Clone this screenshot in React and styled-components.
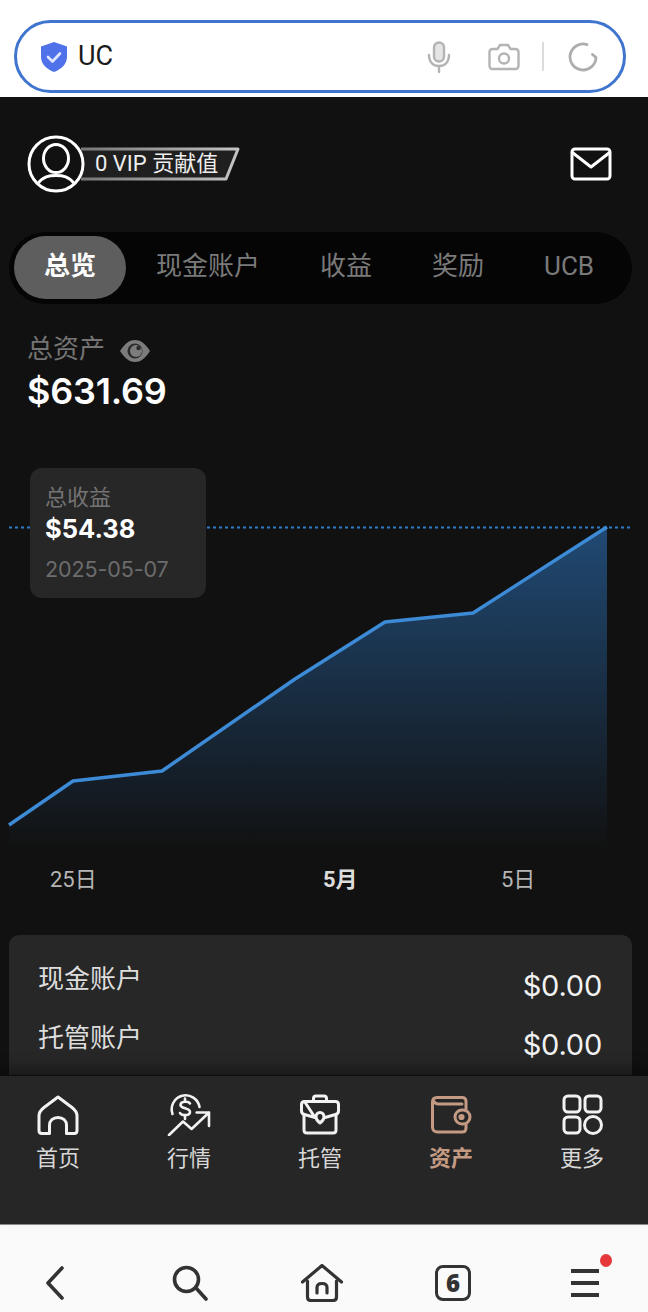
import styled, { createGlobalStyle } from "styled-components";

const GlobalStyle = createGlobalStyle`
  html, body {
    margin: 0;
    padding: 0;
    background: #111;
  }
  * {
    box-sizing: border-box;
  }
`;

const FONT = `Inter, "Noto Sans CJK SC", sans-serif`;

const Page = styled.div`
  width: 648px;
  height: 1312px;
  display: flex;
  flex-direction: column;
  overflow: hidden;
  font-family: ${FONT};
`;

const TopBar = styled.div`
  height: 97px;
  flex: none;
  background: #fff;
  padding: 20px 22px 0 14px;
`;

const AddressPill = styled.div`
  width: 612px;
  height: 73px;
  border: 3px solid #3f74cf;
  border-radius: 37px;
  display: flex;
  align-items: center;
  padding: 0 25px 0 22px;
`;

const UrlText = styled.span`
  margin-left: 9px;
  font-size: 27px;
  color: #1c1c1c;
  font-family: Roboto, sans-serif;
  flex: 1;
  margin-top: -2px;
`;

const PillTools = styled.div`
  display: flex;
  align-items: center;
`;

const MicSlot = styled.span`
  display: flex;
  margin-right: 37px;
`;

const Divider = styled.span`
  width: 2px;
  height: 29px;
  background: #dcdcdc;
  margin: 0 24px 0 22px;
`;

const Screen = styled.div`
  flex: 1;
  min-height: 0;
  display: flex;
  flex-direction: column;
  background: #111;
`;

const Scroll = styled.div`
  flex: 1;
  min-height: 0;
  overflow: hidden;
`;

const Header = styled.div`
  display: flex;
  justify-content: space-between;
  align-items: center;
  padding: 38px 36px 0 27px;
`;

const UserBlock = styled.div`
  display: flex;
  align-items: center;
`;

const Avatar = styled.svg`
  position: relative;
  z-index: 1;
  flex: none;
`;

const Badge = styled.div`
  position: relative;
  width: 160px;
  height: 34px;
  margin-left: -4px;
  padding-left: 14px;
  font-size: 22px;
  line-height: 34px;
  color: #eee;
  white-space: nowrap;
  font-family: Roboto, "Noto Sans CJK SC", sans-serif;

  svg {
    position: absolute;
    left: 0;
    top: 0;
  }
  span {
    position: relative;
  }
`;

const Tabs = styled.div`
  display: flex;
  width: 623px;
  height: 72px;
  margin: 39px 0 0 9px;
  padding: 4px 5px;
  border-radius: 36px;
  background: #050505;
  overflow: hidden;
`;

const Tab = styled.div`
  flex: none;
  height: 63px;
  padding: 0 30px;
  line-height: 61px;
  font-size: 26px;
  font-family: Roboto, "Noto Sans CJK SC", sans-serif;
  white-space: nowrap;
  border-radius: 32px;
  font-weight: ${(p) => (p.$active ? 700 : 400)};
  color: ${(p) => (p.$active ? "#fff" : "#7a7a7a")};
  background: ${(p) => (p.$active ? "#5e5e5e" : "transparent")};
`;

const TotalLabel = styled.div`
  display: flex;
  align-items: center;
  margin: 30px 0 0 27px;
  height: 30px;
  font-size: 26px;
  line-height: 30px;
  color: #747474;

  svg {
    margin: 4px 0 0 15px;
  }
`;

const TotalValue = styled.div`
  margin: 5px 0 0 27px;
  font-size: 36px;
  line-height: 44px;
  font-weight: 600;
  color: #fff;
  letter-spacing: -0.2px;
`;

const ChartWrap = styled.div`
  position: relative;
  height: 452px;

  svg {
    display: block;
  }
`;

const Tooltip = styled.div`
  position: absolute;
  left: 30px;
  top: 55px;
  width: 176px;
  height: 130px;
  padding: 15px 15px 0;
  border-radius: 12px;
  background: #272727;
`;

const TipLabel = styled.div`
  font-size: 22px;
  line-height: 28px;
  color: #747474;
`;

const TipValue = styled.div`
  font-size: 25.5px;
  line-height: 35px;
  font-weight: 700;
  color: #fff;
`;

const TipDate = styled.div`
  margin-top: 6px;
  font-size: 21.5px;
  line-height: 34px;
  color: #6c6c6c;
  letter-spacing: -0.1px;
`;

const Axis = styled.div`
  display: grid;
  grid-template-columns: 273px 178px auto;
  height: 30px;
  padding-left: 50px;
  font-size: 22px;
  line-height: 30px;
  font-family: Roboto, "Noto Sans CJK SC", sans-serif;
`;

const AxisLabel = styled.span`
  font-weight: ${(p) => (p.$bold ? 700 : 400)};
  color: ${(p) => (p.$bold ? "#ddd" : "#b5b5b5")};
`;

const Card = styled.div`
  width: 623px;
  height: 200px;
  margin: 40px 0 0 9px;
  padding: 29px 30px 0;
  border-radius: 10px;
  background: #272727;
`;

const Row = styled.div`
  display: flex;
  justify-content: space-between;
  height: 59px;
`;

const RowLabel = styled.span`
  font-size: 26px;
  line-height: 30px;
  color: #ddd;
  margin-left: -1px;
`;

const RowValue = styled.span`
  margin-top: 4px;
  font-size: 29px;
  line-height: 36px;
  color: #f2f2f2;
  letter-spacing: -0.2px;
`;

const Nav = styled.div`
  position: relative;
  flex: none;
  height: 149px;
  display: flex;
  gap: 41px;
  padding: 16px 0 0 13px;
  background: #262626;
  border-top: 1px solid #0c0c0c;
  box-shadow: 0 -8px 12px rgba(0, 0, 0, 0.35);
`;

const NavItem = styled.div`
  width: 90px;
  display: flex;
  flex-direction: column;
  align-items: center;
  font-size: 22px;
  line-height: 30px;
  font-weight: ${(p) => (p.$active ? 700 : 400)};
  color: ${(p) => (p.$active ? "#c49a83" : "#d8d8d8")};

  svg {
    display: block;
    margin-bottom: 7px;
  }
`;

const BottomBar = styled.div`
  flex: none;
  height: 88px;
  display: grid;
  grid-template-columns: 131px 139px 126px 136px 128px;
  margin-left: -11px;
  background: #fafafa;
  border-top: 1px solid #8d8d8d;
  width: 660px;
`;

const BottomSlot = styled.div`
  position: relative;
  display: flex;
  justify-content: center;
  align-items: center;
  padding-top: 29px;
`;

const TabCount = styled.div`
  width: 36px;
  height: 36px;
  border: 3px solid #333;
  border-radius: 8px;
  display: flex;
  align-items: center;
  justify-content: center;
  font-family: "Open Sans", sans-serif;
  font-size: 24px;
  font-weight: 800;
  line-height: 1;
  color: #333;
`;

const Dot = styled.span`
  position: absolute;
  left: 79px;
  top: 29px;
  width: 12px;
  height: 13px;
  border-radius: 50%;
  background: #e5383b;
`;

const ShieldIcon = () => (
  <svg width="30" height="32" viewBox="0 0 30 32">
    <path d="M15 1 L28 5.5 V16 C28 23 22 28.5 15 31 C8 28.5 2 23 2 16 V5.5 Z" fill="#4f72ea" />
    <path d="M9 16 L13.5 20.5 L21 12.5" fill="none" stroke="#dfe7ff" strokeWidth="2.6" strokeLinecap="round" strokeLinejoin="round" />
  </svg>
);

const MicIcon = () => (
  <svg width="24" height="32" viewBox="0 0 24 32" fill="none" stroke="#b4b4b4" strokeWidth="2.4" strokeLinecap="round">
    <rect x="7" y="1.5" width="10" height="19" rx="5" fill="#b4b4b4" fillOpacity="0.35" />
    <path d="M2 14 C2 21 6 25 12 25 C18 25 22 21 22 14 M12 25 V31" />
  </svg>
);

const CameraIcon = () => (
  <svg width="32" height="28" viewBox="0 0 32 28" fill="none" stroke="#b4b4b4" strokeWidth="2.4" strokeLinejoin="round">
    <path d="M4.5 6 H9.5 L12 2 H20 L22.5 6 H27.5 A3 3 0 0 1 30.5 9 V23 A3 3 0 0 1 27.5 26 H4.5 A3 3 0 0 1 1.5 23 V9 A3 3 0 0 1 4.5 6 Z" />
    <circle cx="16" cy="15.5" r="5" />
  </svg>
);

const RefreshIcon = () => (
  <svg width="30" height="30" viewBox="0 0 30 30" fill="none" stroke="#adadad" strokeWidth="2.8" strokeLinecap="round" strokeLinejoin="round">
    <path d="M19 2.6 A13 13 0 1 0 28 15.5 L24.5 12.5" />
  </svg>
);

const AvatarIcon = () => (
  <Avatar width="58" height="58" viewBox="0 0 58 58" fill="#111" stroke="#fff" strokeWidth="3">
    <circle cx="29" cy="29" r="27" />
    <ellipse cx="29" cy="23.5" rx="12.5" ry="14" />
    <path d="M11 48.5 C16 41.5 22 40.5 29 40.5 C36 40.5 42 41.5 47 48.5" />
  </Avatar>
);

const BadgeShape = () => (
  <svg width="160" height="34" viewBox="0 0 160 34" fill="none">
    <defs>
      <linearGradient id="badgeStroke" x1="0" y1="0" x2="1" y2="0">
        <stop offset="0" stopColor="#777" />
        <stop offset="1" stopColor="#c4c4c4" />
      </linearGradient>
    </defs>
    <path d="M0 2 H157 L145 32 H0" fill="#1f1f1f" stroke="url(#badgeStroke)" strokeWidth="3" strokeLinejoin="round" />
  </svg>
);

const MailIcon = () => (
  <svg width="42" height="34" viewBox="0 0 42 34" fill="none" stroke="#fff" strokeWidth="3" strokeLinecap="round" strokeLinejoin="round">
    <rect x="2" y="2" width="38" height="30" rx="3" />
    <path d="M3 6 L21 20 L39 6" />
  </svg>
);

const EyeIcon = () => (
  <svg width="30" height="22" viewBox="0 0 30 22">
    <path d="M0 11 C5 3 10 0 15 0 C20 0 25 3 30 11 C25 19 20 22 15 22 C10 22 5 19 0 11 Z" fill="#7c7c7c" />
    <circle cx="15" cy="11" r="7.5" fill="#2a2a2a" />
    <circle cx="16" cy="11" r="6" fill="#7c7c7c" />
    <circle cx="18.5" cy="8" r="2.2" fill="#2a2a2a" />
  </svg>
);

const NavHome = () => (
  <svg width="44" height="44" viewBox="0 0 44 44" fill="none" stroke="#f2f2f2" strokeWidth="3" strokeLinejoin="round" strokeLinecap="round">
    <path d="M22 5 L36 15.5 C38.5 17.5 41 19.5 41 23.5 V38.5 C41 40.5 40 41.5 38 41.5 H30.5 V33.5 C30.5 28.5 27 25.5 22 25.5 C17 25.5 13.5 28.5 13.5 33.5 V41.5 H6 C4 41.5 3 40.5 3 38.5 V23.5 C3 19.5 5.5 17.5 8 15.5 Z" />
  </svg>
);

const NavMarket = () => (
  <svg width="44" height="44" viewBox="0 0 44 44" fill="none" stroke="#f2f2f2" strokeWidth="2.6" strokeLinecap="round" strokeLinejoin="round">
    <path d="M5.5 22 A14 14 0 1 1 32.5 15" />
    <path d="M23 11.5 C21.5 9 13.5 9 13.5 13 C13.5 17 23 15.5 23 20 C23 24 14.5 24 13 21 M18 6.5 V9.5 M18 24 V27" />
    <path d="M2 43 L16 29.5 L24.6 37 L42 20.5 M29.6 20.5 H42 V34" />
  </svg>
);

const NavCustody = () => (
  <svg width="44" height="44" viewBox="0 0 44 44" fill="none" stroke="#f2f2f2" strokeWidth="3" strokeLinecap="round" strokeLinejoin="round">
    <path d="M15.5 9.5 V6.5 C15.5 5 16.5 4 18 4 H26 C27.5 4 28.5 5 28.5 6.5 V9.5" />
    <path d="M6.5 9.5 H37.5 C39.5 9.5 40.5 10.5 40.5 12.5 V19 C40.5 21 39.5 22 37.5 22.5 L27 25.5 M17 25.5 L6.5 22.5 C4.5 22 3.5 21 3.5 19 V12.5 C3.5 10.5 4.5 9.5 6.5 9.5 Z" />
    <path d="M6 23 V38 C6 40 7 41 9 41 H35 C37 41 38 40 38 38 V23" />
    <path d="M22 20.5 C24.5 20.5 26 22.5 26 25 C26 27.5 24 29.5 22 31 C20 29.5 18 27.5 18 25 C18 22.5 19.5 20.5 22 20.5 Z" />
  </svg>
);

const NavWallet = () => (
  <svg width="44" height="44" viewBox="0 0 44 44" fill="none" stroke="#c49a83" strokeWidth="3" strokeLinecap="round" strokeLinejoin="round">
    <path d="M37 17 V9.5 C37 7 35.5 5.5 33 5.5 H8 C5 5.5 3.5 7.5 3.5 10 V35 C3.5 38 5.5 40 8.5 40 H33 C35.5 40 37 38.5 37 36 V32" />
    <path d="M4.5 9 C5.5 11 7 12 9.5 12 H33" />
    <rect x="26" y="18" width="15" height="14" rx="7" />
    <circle cx="32.5" cy="25" r="1.6" fill="#c49a83" />
  </svg>
);

const NavMore = () => (
  <svg width="44" height="44" viewBox="0 0 44 44" fill="none" stroke="#f2f2f2" strokeWidth="3">
    <rect x="4" y="4" width="16" height="16" rx="4" />
    <rect x="25" y="4" width="16" height="16" rx="4" />
    <rect x="4" y="25" width="16" height="16" rx="4" />
    <circle cx="33" cy="33" r="8.5" />
  </svg>
);

const BackIcon = () => (
  <svg width="20" height="34" viewBox="0 0 20 34" fill="none" stroke="#333" strokeWidth="3.6" strokeLinecap="round" strokeLinejoin="round">
    <path d="M17 2 L3 17 L17 32" />
  </svg>
);

const SearchIcon = () => (
  <svg width="36" height="36" viewBox="0 0 36 36" fill="none" stroke="#333" strokeWidth="3.6" strokeLinecap="round">
    <circle cx="14.5" cy="14.5" r="12" />
    <path d="M24 23 L34 34" />
  </svg>
);

const BrowserHomeIcon = () => (
  <svg width="42" height="38" viewBox="0 0 42 38" fill="none" stroke="#333" strokeWidth="3.2" strokeLinecap="round" strokeLinejoin="round">
    <path d="M1.5 18 L21 1.5 L40.5 18" />
    <path d="M6.5 17 V33 C6.5 35.5 8 36.5 10 36.5 H32 C34 36.5 35.5 35.5 35.5 33 V17" />
    <path d="M16 29 V23.5 C16 20.5 18 19.5 21 19.5 C24 19.5 26 20.5 26 23.5 V29" />
  </svg>
);

const MenuIcon = () => (
  <svg width="28" height="30" viewBox="0 0 28 30" fill="#333">
    <rect y="1" width="28" height="4" />
    <rect y="13" width="28" height="4" />
    <rect y="25" width="28" height="4" />
  </svg>
);

// chart points in the chart's own coordinates
const POINTS = [
  [9, 412],
  [73, 368],
  [162, 358],
  [295, 266],
  [385, 209],
  [473, 200],
  [607, 114],
];

const LINE = POINTS.map((p) => p.join(",")).join(" ");
const AREA = `9,437 ${LINE} 607,437`;

const Chart = () => (
  <svg width="648" height="452" viewBox="0 0 648 452">
    <defs>
      <linearGradient id="areaFill" x1="0" y1="114" x2="0" y2="437" gradientUnits="userSpaceOnUse">
        <stop offset="0" stopColor="#2a6cb0" stopOpacity="0.62" />
        <stop offset="0.85" stopColor="#2a6cb0" stopOpacity="0.1" />
        <stop offset="1" stopColor="#2a6cb0" stopOpacity="0" />
      </linearGradient>
    </defs>
    <line x1="9" y1="114.5" x2="630" y2="114.5" stroke="#2f7cc8" strokeWidth="2" strokeDasharray="3 3" />
    <polygon points={AREA} fill="url(#areaFill)" />
    <polyline points={LINE} fill="none" stroke="#3d8bd6" strokeWidth="3.5" strokeLinejoin="round" />
  </svg>
);

const TABS = ["总览", "现金账户", "收益", "奖励", "UCB"];

const NAV = [
  { label: "首页", icon: <NavHome /> },
  { label: "行情", icon: <NavMarket /> },
  { label: "托管", icon: <NavCustody /> },
  { label: "资产", icon: <NavWallet />, active: true },
  { label: "更多", icon: <NavMore /> },
];

function App() {
  return (
    <Page>
      <GlobalStyle />
      <TopBar>
        <AddressPill>
          <ShieldIcon />
          <UrlText>UC</UrlText>
          <PillTools>
            <MicSlot>
              <MicIcon />
            </MicSlot>
            <CameraIcon />
            <Divider />
            <RefreshIcon />
          </PillTools>
        </AddressPill>
      </TopBar>

      <Screen>
        <Scroll>
          <Header>
            <UserBlock>
              <AvatarIcon />
              <Badge>
                <BadgeShape />
                <span>0 VIP 贡献值</span>
              </Badge>
            </UserBlock>
            <MailIcon />
          </Header>

          <Tabs>
            {TABS.map((t, i) => (
              <Tab key={t} $active={i === 0}>
                {t}
              </Tab>
            ))}
          </Tabs>

          <TotalLabel>
            总资产
            <EyeIcon />
          </TotalLabel>
          <TotalValue>$631.69</TotalValue>

          <ChartWrap>
            <Chart />
            <Tooltip>
              <TipLabel>总收益</TipLabel>
              <TipValue>$54.38</TipValue>
              <TipDate>2025-05-07</TipDate>
            </Tooltip>
          </ChartWrap>

          <Axis>
            <AxisLabel>25日</AxisLabel>
            <AxisLabel $bold>5月</AxisLabel>
            <AxisLabel>5日</AxisLabel>
          </Axis>

          <Card>
            <Row>
              <RowLabel>现金账户</RowLabel>
              <RowValue>$0.00</RowValue>
            </Row>
            <Row>
              <RowLabel>托管账户</RowLabel>
              <RowValue>$0.00</RowValue>
            </Row>
          </Card>
        </Scroll>

        <Nav>
          {NAV.map((n) => (
            <NavItem key={n.label} $active={n.active}>
              {n.icon}
              {n.label}
            </NavItem>
          ))}
        </Nav>
      </Screen>

      <BottomBar>
        <BottomSlot><BackIcon /></BottomSlot>
        <BottomSlot><SearchIcon /></BottomSlot>
        <BottomSlot><BrowserHomeIcon /></BottomSlot>
        <BottomSlot><TabCount>6</TabCount></BottomSlot>
        <BottomSlot>
          <MenuIcon />
          <Dot />
        </BottomSlot>
      </BottomBar>
    </Page>
  );
}

export default App;
